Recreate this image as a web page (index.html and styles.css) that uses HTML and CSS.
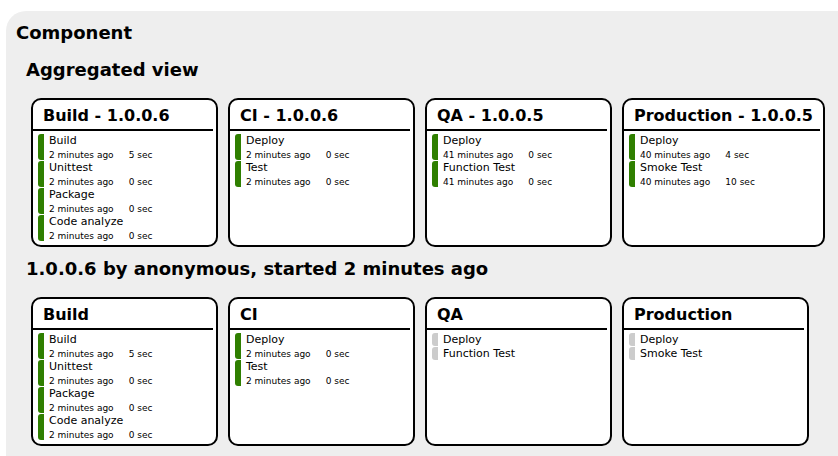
FILE: index.html
```
<!DOCTYPE html>
<html lang="en">
<head>
<meta charset="utf-8">
<title>Delivery Pipeline</title>
<link rel="stylesheet" href="styles.css">
</head>
<body>
<main class="component">
  <h1>Component</h1>
  <section class="pipeline">
    <h2>Aggregated view</h2>
    <div class="stages">
      <article class="stage">
        <h3>Build - 1.0.0.6</h3>
        <ul>
          <li class="task done"><div><h4>Build</h4><p><span>2 minutes ago</span><span>5 sec</span></p></div></li>
          <li class="task done"><div><h4>Unittest</h4><p><span>2 minutes ago</span><span>0 sec</span></p></div></li>
          <li class="task done"><div><h4>Package</h4><p><span>2 minutes ago</span><span>0 sec</span></p></div></li>
          <li class="task done"><div><h4>Code analyze</h4><p><span>2 minutes ago</span><span>0 sec</span></p></div></li>
        </ul>
      </article>
      <article class="stage">
        <h3>CI - 1.0.0.6</h3>
        <ul>
          <li class="task done"><div><h4>Deploy</h4><p><span>2 minutes ago</span><span>0 sec</span></p></div></li>
          <li class="task done"><div><h4>Test</h4><p><span>2 minutes ago</span><span>0 sec</span></p></div></li>
        </ul>
      </article>
      <article class="stage">
        <h3>QA - 1.0.0.5</h3>
        <ul>
          <li class="task done"><div><h4>Deploy</h4><p><span>41 minutes ago</span><span>0 sec</span></p></div></li>
          <li class="task done"><div><h4>Function Test</h4><p><span>41 minutes ago</span><span>0 sec</span></p></div></li>
        </ul>
      </article>
      <article class="stage">
        <h3>Production - 1.0.0.5</h3>
        <ul>
          <li class="task done"><div><h4>Deploy</h4><p><span>40 minutes ago</span><span>4 sec</span></p></div></li>
          <li class="task done"><div><h4>Smoke Test</h4><p><span>40 minutes ago</span><span>10 sec</span></p></div></li>
        </ul>
      </article>
    </div>
  </section>
  <section class="pipeline">
    <h2>1.0.0.6 by anonymous, started 2 minutes ago</h2>
    <div class="stages">
      <article class="stage">
        <h3>Build</h3>
        <ul>
          <li class="task done"><div><h4>Build</h4><p><span>2 minutes ago</span><span>5 sec</span></p></div></li>
          <li class="task done"><div><h4>Unittest</h4><p><span>2 minutes ago</span><span>0 sec</span></p></div></li>
          <li class="task done"><div><h4>Package</h4><p><span>2 minutes ago</span><span>0 sec</span></p></div></li>
          <li class="task done"><div><h4>Code analyze</h4><p><span>2 minutes ago</span><span>0 sec</span></p></div></li>
        </ul>
      </article>
      <article class="stage">
        <h3>CI</h3>
        <ul>
          <li class="task done"><div><h4>Deploy</h4><p><span>2 minutes ago</span><span>0 sec</span></p></div></li>
          <li class="task done"><div><h4>Test</h4><p><span>2 minutes ago</span><span>0 sec</span></p></div></li>
        </ul>
      </article>
      <article class="stage">
        <h3>QA</h3>
        <ul>
          <li class="task idle"><div><h4>Deploy</h4></div></li>
          <li class="task idle"><div><h4>Function Test</h4></div></li>
        </ul>
      </article>
      <article class="stage">
        <h3>Production</h3>
        <ul>
          <li class="task idle"><div><h4>Deploy</h4></div></li>
          <li class="task idle"><div><h4>Smoke Test</h4></div></li>
        </ul>
      </article>
    </div>
  </section>
</main>
</body>
</html>
```
FILE: styles.css
```
* {
  box-sizing: border-box;
  margin: 0;
  padding: 0;
}

body {
  padding: 11px 0 0 6px;
  background: #fff;
  color: #000;
  font-family: Verdana, "DejaVu Sans", sans-serif;
}

.component {
  padding: 10px 0 10px 10px;
  background: #eee;
  border-top-left-radius: 20px;
}

h1,
h2 {
  font-size: 18px;
  line-height: 24px;
}

.pipeline {
  padding: 13px 0 0 10px;
}

.pipeline + .pipeline {
  padding-top: 10px;
}

.stages {
  display: flex;
  gap: 10px;
  padding: 16px 0 0 5px;
}

.stage {
  flex: none;
  min-width: 187px;
  padding: 3px 3px 3px 0;
  background: #fff;
  border: 2px solid #000;
  border-radius: 10px;
}

.stage h3 {
  padding: 0 7px 0 10px;
  font-size: 16px;
  line-height: 26px;
  white-space: nowrap;
  border-bottom: 2px solid #000;
}

.stage ul {
  padding: 3px 0 0 5px;
  list-style: none;
}

.task {
  display: flex;
  gap: 5px;
}

.task::before {
  content: "";
  width: 6px;
  margin-bottom: 1px;
  border-radius: 3px 0 0 3px;
}

.done::before {
  background: #2f7f00;
}

.idle::before {
  background: #ccc;
}

.task h4 {
  font-size: 11px;
  line-height: 14px;
  font-weight: normal;
}

.task p {
  display: flex;
  gap: 15px;
  padding-top: 1px;
  font-size: 9px;
  line-height: 12px;
}
```
